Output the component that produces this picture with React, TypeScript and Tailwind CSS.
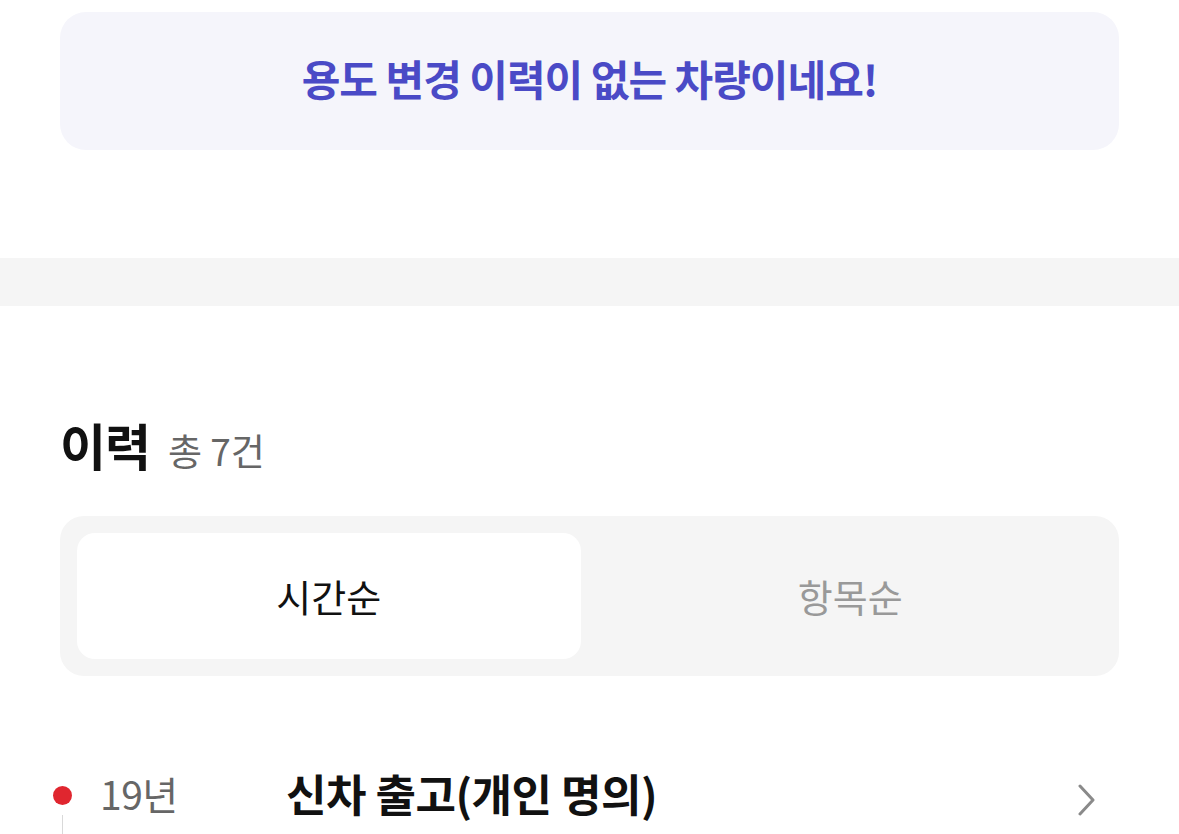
import { useState } from "react"

const font = { fontFamily: '"Noto Sans CJK KR", "Noto Sans", sans-serif' }

function Timeline() {
  return (
    <div className="flex items-start pl-[53px] pr-[82px] pt-[89px]">
      <div className="flex flex-col items-center w-[19px] pt-[21px]">
        <span className="block w-[19px] h-[19px] rounded-full bg-[#e0262f]" />
        <span className="block w-px h-[40px] mt-[10px] bg-[#d9d9d9]" />
      </div>
      <div className="ml-[28px] w-[186px] text-[39px] leading-[56px] text-[#666] tracking-[-0.5px]">19년</div>
      <div className="flex-1 text-[44px] leading-[56px] font-bold text-[#111] tracking-[-0.5px]">신차 출고(개인 명의)</div>
      <svg width="20" height="32" viewBox="0 0 20 32" className="mt-[19px]">
        <path d="M3 2 L16 16 L3 30" fill="none" stroke="#8a8a8a" strokeWidth="3" strokeLinecap="round" strokeLinejoin="round" />
      </svg>
    </div>
  )
}

export default function App() {
  const [tab, setTab] = useState("time")
  return (
    <div className="w-[1179px] h-[834px] overflow-hidden bg-white" style={font}>
      <div className="px-[60px] pt-[12px]">
        <div className="h-[138px] rounded-[26px] bg-[#f5f5fb] flex items-center justify-center pb-[8px]">
          <p className="text-[42px] font-bold text-[#4a4ac6] tracking-[-1px]">용도 변경 이력이 없는 차량이네요!</p>
        </div>
      </div>

      <div className="mt-[108px] h-[48px] bg-[#f5f5f5]" />

      <div className="px-[60px] pt-[108px]">
        <div className="flex items-baseline gap-[18px]">
          <h2 className="text-[50px] leading-[60px] font-bold text-[#111] tracking-[-1px]">이력</h2>
          <span className="text-[37px] text-[#666]">총 7건</span>
        </div>

        <div className="mt-[37px] h-[160px] rounded-[24px] bg-[#f5f5f5] p-[17px] flex gap-[18px]">
          <button
            onClick={() => setTab("time")}
            className={
              tab === "time"
                ? "flex-1 rounded-[18px] bg-white text-[38px] text-[#111]"
                : "flex-1 rounded-[18px] text-[38px] text-[#999]"
            }
          >
            시간순
          </button>
          <button
            onClick={() => setTab("item")}
            className={
              tab === "item"
                ? "flex-1 rounded-[18px] bg-white text-[38px] text-[#111]"
                : "flex-1 rounded-[18px] text-[38px] text-[#999]"
            }
          >
            항목순
          </button>
        </div>
      </div>

      <Timeline />
    </div>
  )
}
